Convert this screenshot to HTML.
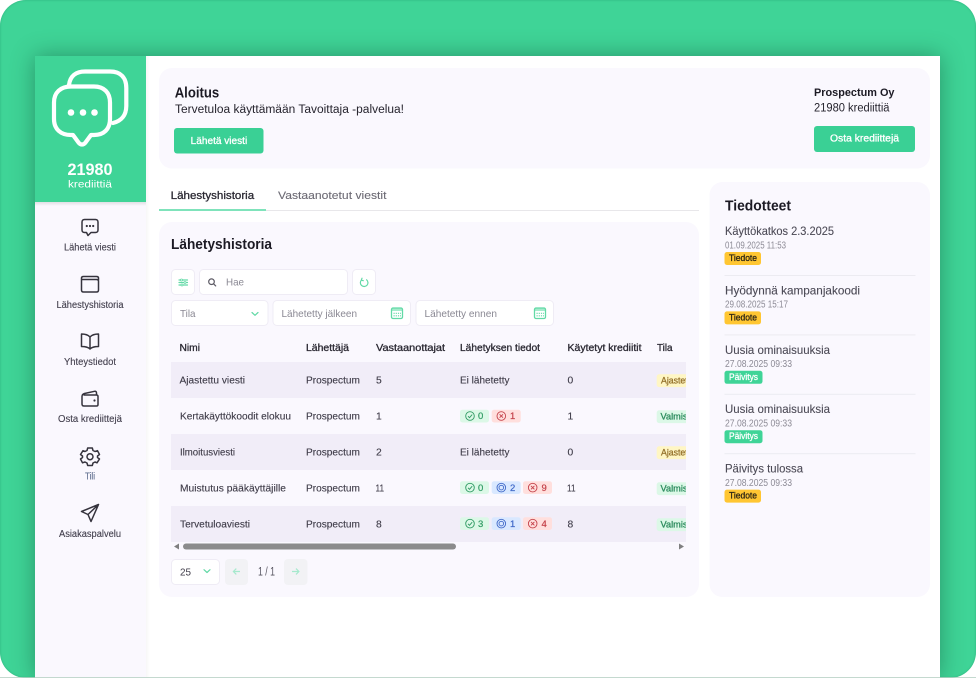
<!DOCTYPE html>
<html lang="fi"><head><meta charset="utf-8"><title>Tavoittaja</title>
<style>
html,body{margin:0;padding:0;background:#fff;width:976px;height:678px;overflow:hidden}
#bg{position:absolute;left:0;top:0;width:976px;height:678px;border-radius:26px;background:#3fd497;box-shadow:inset 0 0 2px #2fae7c;overflow:hidden}
#panel{position:absolute;left:35px;top:56px;width:905px;height:622px;background:#fff;box-shadow:0 0 22px rgba(15,70,48,.45)}
svg{position:absolute;left:0;top:0}
text{font-family:"Liberation Sans",sans-serif;font-size:10px;fill:#3a3844}
.b{font-weight:700}
.h{fill:#1c1a24;font-weight:700;font-size:14.5px}
.th{fill:#2b2933;stroke:#2b2933;stroke-width:.3px;font-size:10px}
.td{fill:#3e3b48;stroke:#3e3b48;stroke-width:.12px;font-size:10.3px}
.nav{fill:#44414f;stroke:#44414f;stroke-width:.12px;font-size:9.7px}
.ph{fill:#8a8893;font-size:10.3px}
.news{fill:#4c4a56;stroke:#4c4a56;stroke-width:.1px;font-size:12px}
.date{fill:#8d8b96;font-size:10px}
.tag{font-size:9.3px;stroke-width:.28px}
.n{font-size:9.5px;stroke-width:.2px}
.btn{font-size:10px;fill:#fff;stroke:#fff;stroke-width:.3px}
.ic{fill:none;stroke:#35333d;stroke-width:1.5;stroke-linecap:round;stroke-linejoin:round}
.gi{fill:none;stroke:#62d9a6;stroke-width:1.2;stroke-linecap:round;stroke-linejoin:round}
.box{fill:#fff;stroke:#efecf5;stroke-width:1}
</style></head><body>
<div id="bg"><div id="panel"></div></div>
<svg width="976" height="678" viewBox="0 0 976 678" xmlns="http://www.w3.org/2000/svg">
<defs>
<clipPath id="tc"><rect x="171" y="340" width="515" height="210"/></clipPath>
<linearGradient id="sr" x1="0" x2="1" y1="0" y2="0"><stop offset="0" stop-color="#000" stop-opacity=".035"/><stop offset="1" stop-color="#000" stop-opacity="0"/></linearGradient>
<linearGradient id="sd" x1="0" x2="0" y1="0" y2="1"><stop offset="0" stop-color="#000" stop-opacity=".1"/><stop offset="1" stop-color="#000" stop-opacity="0"/></linearGradient>
</defs>
<!-- sidebar -->
<rect x="35" y="56" width="111" height="622" fill="#faf8fe"/>
<rect x="146" y="56" width="4" height="622" fill="url(#sr)"/>
<rect x="35" y="56" width="111" height="146" fill="#3fd497"/>
<rect x="35" y="202" width="111" height="4" fill="url(#sd)"/>
<!-- logo -->
<g fill="none" stroke="#fff" stroke-width="4.2" stroke-linejoin="round" stroke-linecap="round">
<path d="M69 85C70 76 76 71.500 85 71.500H110C120.500 71.500 126.300 77.500 126.300 88V106C126.300 115 121.500 121 113 123"/>
<path d="M71 86.500H94C104 86.500 110 92.500 110 102.500V119C110 129 104 135 94 135H91L85.500 142.500C83.500 145.200 80.500 145.200 78.500 142.500L73 135H71C60.500 135 54 129 54 119V102.500C54 92.500 60.500 86.500 71 86.500Z"/>
</g>
<circle cx="71" cy="112.500" r="3.300" fill="#fff"/><circle cx="83" cy="112.500" r="3.300" fill="#fff"/><circle cx="94.500" cy="112.500" r="3.300" fill="#fff"/>
<text x="67.500" y="175" textLength="45" lengthAdjust="spacingAndGlyphs" class="b" style="font-size:17px;fill:#fff">21980</text>
<text x="68" y="187.500" textLength="44" lengthAdjust="spacingAndGlyphs" style="font-size:10.5px;fill:#fff">krediittiä</text>
<!-- nav icons -->
<g class="ic">
<path d="M84.500 219.500H95.500C97 219.500 98 220.500 98 222V230C98 231.500 97 232.500 95.500 232.500H91L88 235.500L86.500 232.500H84.500C83 232.500 82 231.500 82 230V222C82 220.500 83 219.500 84.500 219.500Z"/>
<path d="M81.500 279.500V290C81.500 291.200 82.300 292 83.500 292H96.500C97.700 292 98.500 291.200 98.500 290V281C98.500 279.800 97.700 279.500 96.500 279.500H81.500ZM81.500 279.500V278C81.500 277 82.300 276.500 83.500 276.500H96.500C97.700 276.500 98.500 277 98.500 278V280"/>
<path d="M90 337C88 334.800 85 334 81.500 334V346.500C85 346.500 88 347 90 349C92 347 95 346.500 98.500 346.500V334C95 334 92 334.800 90 337ZM90 337V349"/>
<path d="M84 395H96.500C97.500 395 98 395.700 98 396.500V404.500C98 405.500 97.500 406 96.500 406H84C82.800 406 82 405.200 82 404V396.500C82 394.500 83 394 84.500 393.500L94.500 391.300C95.800 391 96.500 391.800 96.500 393V395"/>
<path d="M87.700 448H92.300L93 450.500L95 451.500L97.500 450.700L99.500 454.500L97.500 456L97.500 457.500L99.500 459L97 462.800L95 462L93 463L92.300 465.500H87.700L87 463L85 462L82.500 462.800L80.500 459L82.500 457.500V456L80.500 454.500L83 450.700L85 451.500L87 450.500Z"/>
<circle cx="90" cy="456.700" r="3"/>
<path d="M98.500 504.500L81.500 511.500L88 514.500L91 521.500ZM98.500 504.500L88 514.500"/>
</g>
<circle cx="86.800" cy="226" r="1.100" fill="#35333d"/><circle cx="90" cy="226" r="1.100" fill="#35333d"/><circle cx="93.200" cy="226" r="1.100" fill="#35333d"/>
<circle cx="94.500" cy="400.500" r="1.100" fill="#35333d"/>
<text x="64" y="250.700" textLength="52" lengthAdjust="spacingAndGlyphs" class="nav">Lähetä viesti</text>
<text x="56.500" y="308" textLength="67" lengthAdjust="spacingAndGlyphs" class="nav">Lähestyshistoria</text>
<text x="64" y="365" textLength="52" lengthAdjust="spacingAndGlyphs" class="nav">Yhteystiedot</text>
<text x="58" y="422" textLength="64" lengthAdjust="spacingAndGlyphs" class="nav">Osta krediittejä</text>
<text x="85" y="479.500" textLength="10" lengthAdjust="spacingAndGlyphs" class="nav" style="fill:#5b6b8c;stroke:#5b6b8c">Tili</text>
<text x="59" y="537" textLength="62" lengthAdjust="spacingAndGlyphs" class="nav">Asiakaspalvelu</text>
<!-- top card -->
<rect x="159" y="68" width="771" height="100.500" rx="13" fill="#faf8fe"/>
<text x="174.700" y="97.300" textLength="44.500" lengthAdjust="spacingAndGlyphs" class="h">Aloitus</text>
<text x="175" y="113" textLength="229" lengthAdjust="spacingAndGlyphs" style="font-size:11.500px;fill:#26242e">Tervetuloa käyttämään Tavoittaja -palvelua!</text>
<rect x="174" y="128" width="89.500" height="25.500" rx="3" fill="#3ad095"/>
<text x="190.700" y="144" textLength="56.500" lengthAdjust="spacingAndGlyphs" class="btn">Lähetä viesti</text>
<text x="814" y="96" textLength="80.500" lengthAdjust="spacingAndGlyphs" class="b" style="font-size:11px;fill:#1c1a24">Prospectum Oy</text>
<text x="814" y="111.700" textLength="75.500" lengthAdjust="spacingAndGlyphs" style="font-size:11.500px;fill:#26242e">21980 krediittiä</text>
<rect x="814" y="126" width="101" height="26" rx="3" fill="#3ad095"/>
<text x="830" y="141.700" textLength="69" lengthAdjust="spacingAndGlyphs" class="btn">Osta krediittejä</text>
<!-- tabs -->
<rect x="159" y="210" width="540" height="1" fill="#e8e7ea"/>
<rect x="159" y="209" width="107" height="2" fill="#7fe3bb"/>
<text x="170.700" y="199" textLength="83.500" lengthAdjust="spacingAndGlyphs" style="font-size:11px;fill:#2b2933;stroke:#2b2933;stroke-width:.3px">Lähestyshistoria</text>
<text x="278" y="199" textLength="108.500" lengthAdjust="spacingAndGlyphs" style="font-size:11px;fill:#6c6a74;stroke:#6c6a74;stroke-width:.1px">Vastaanotetut viestit</text>
<!-- list card -->
<rect x="159" y="222" width="540" height="375" rx="13" fill="#faf8fe"/>
<text x="171" y="249" textLength="101" lengthAdjust="spacingAndGlyphs" class="h">Lähetyshistoria</text>
<!-- toolbar -->
<rect class="box" x="171.500" y="269.500" width="23" height="25" rx="4"/>
<rect class="box" x="199.500" y="269.500" width="148" height="25" rx="4"/>
<rect class="box" x="352.500" y="269.500" width="23" height="25" rx="4"/>
<rect class="box" x="171.500" y="300.500" width="96.500" height="25" rx="4"/>
<rect class="box" x="273" y="300.500" width="137.500" height="25" rx="4"/>
<rect class="box" x="416" y="300.500" width="137.500" height="25" rx="4"/>
<path class="gi" d="M179 280H187.500M179 282.500H187.500M179 285H187.500"/>
<circle cx="181.500" cy="280" r="1" fill="#fff" stroke="#62d9a6" stroke-width=".8"/><circle cx="185" cy="282.500" r="1" fill="#fff" stroke="#62d9a6" stroke-width=".8"/><circle cx="182" cy="285" r="1" fill="#fff" stroke="#62d9a6" stroke-width=".8"/>
<g fill="none" stroke="#5c5a64" stroke-width="1.200" stroke-linecap="round"><circle cx="211.500" cy="281.700" r="2.800"/><path d="M213.700 283.900L215.700 285.900"/></g>
<text x="226" y="285.500" textLength="18" lengthAdjust="spacingAndGlyphs" class="ph">Hae</text>
<path class="gi" d="M366.600 279.800A3.800 3.800 0 1 1 361.500 280M362 278.200L361.300 280.200L363.300 280.700"/>
<text x="180" y="317" textLength="15.500" lengthAdjust="spacingAndGlyphs" class="ph">Tila</text>
<path class="gi" d="M252 312.500L255 315.300L258 312.500"/>
<text x="281.500" y="317" textLength="75.500" lengthAdjust="spacingAndGlyphs" class="ph">Lähetetty jälkeen</text>
<text x="424.500" y="317" textLength="72.500" lengthAdjust="spacingAndGlyphs" class="ph">Lähetetty ennen</text>
<g><rect x="391.500" y="308" width="11" height="3" fill="#a5ebcc"/><rect class="gi" x="391.500" y="308" width="11" height="10.500" rx="1.500" style="stroke-width:1.300"/><path d="M393.500 313.300H401M393.500 315.800H401" stroke="#62d9a6" stroke-width="1.100" stroke-dasharray="1.200 1" fill="none"/></g>
<g><rect x="534.500" y="308" width="11" height="3" fill="#a5ebcc"/><rect class="gi" x="534.500" y="308" width="11" height="10.500" rx="1.500" style="stroke-width:1.300"/><path d="M536.500 313.300H544M536.500 315.800H544" stroke="#62d9a6" stroke-width="1.100" stroke-dasharray="1.200 1" fill="none"/></g>
<!-- table -->
<text x="179.500" y="351" textLength="20.500" lengthAdjust="spacingAndGlyphs" class="th">Nimi</text>
<text x="306" y="351" textLength="43" lengthAdjust="spacingAndGlyphs" class="th">Lähettäjä</text>
<text x="376" y="351" textLength="69" lengthAdjust="spacingAndGlyphs" class="th">Vastaanottajat</text>
<text x="460" y="351" textLength="80" lengthAdjust="spacingAndGlyphs" class="th">Lähetyksen tiedot</text>
<text x="567.500" y="351" textLength="74" lengthAdjust="spacingAndGlyphs" class="th">Käytetyt krediitit</text>
<text x="657" y="351" textLength="15.500" lengthAdjust="spacingAndGlyphs" class="th">Tila</text>
<rect x="171" y="362" width="515" height="36" fill="#f1edf8"/>
<rect x="171" y="434" width="515" height="36" fill="#f1edf8"/>
<rect x="171" y="506" width="515" height="36" fill="#f1edf8"/>
<g>
<text x="179.500" y="383.700" textLength="65.500" lengthAdjust="spacingAndGlyphs" class="td">Ajastettu viesti</text>
<text x="180" y="419.700" textLength="111" lengthAdjust="spacingAndGlyphs" class="td">Kertakäyttökoodit elokuu</text>
<text x="180" y="455.700" textLength="55" lengthAdjust="spacingAndGlyphs" class="td">Ilmoitusviesti</text>
<text x="180" y="491.700" textLength="106" lengthAdjust="spacingAndGlyphs" class="td">Muistutus pääkäyttäjille</text>
<text x="180" y="527.700" textLength="70" lengthAdjust="spacingAndGlyphs" class="td">Tervetuloaviesti</text>
<text x="306" y="383.700" textLength="54" lengthAdjust="spacingAndGlyphs" class="td">Prospectum</text>
<text x="306" y="419.700" textLength="54" lengthAdjust="spacingAndGlyphs" class="td">Prospectum</text>
<text x="306" y="455.700" textLength="54" lengthAdjust="spacingAndGlyphs" class="td">Prospectum</text>
<text x="306" y="491.700" textLength="54" lengthAdjust="spacingAndGlyphs" class="td">Prospectum</text>
<text x="306" y="527.700" textLength="54" lengthAdjust="spacingAndGlyphs" class="td">Prospectum</text>
<text x="376" y="383.700" class="td">5</text><text x="376" y="419.700" class="td">1</text><text x="376" y="455.700" class="td">2</text>
<text x="375.500" y="491.700" textLength="8.500" lengthAdjust="spacingAndGlyphs" class="td">11</text><text x="376" y="527.700" class="td">8</text>
<text x="460" y="383.700" textLength="49.500" lengthAdjust="spacingAndGlyphs" class="td">Ei lähetetty</text>
<text x="460" y="455.700" textLength="49.500" lengthAdjust="spacingAndGlyphs" class="td">Ei lähetetty</text>
<text x="567.500" y="383.700" class="td">0</text><text x="567.500" y="419.700" class="td">1</text><text x="567.500" y="455.700" class="td">0</text>
<text x="567" y="491.700" textLength="8.500" lengthAdjust="spacingAndGlyphs" class="td">11</text><text x="567.500" y="527.700" class="td">8</text>
</g>
<!-- send badges row 2 -->
<g>
<rect x="460" y="409.700" width="29" height="12.800" rx="2.500" fill="#dcf8e7"/>
<circle cx="470" cy="416" r="4.300" fill="none" stroke="#2f9a63" stroke-width=".9"/><path d="M468 416.200L469.500 417.700L472.200 414.600" fill="none" stroke="#2f9a63" stroke-width=".9"/>
<text x="478" y="419.200" class="n" style="fill:#2f9a63;stroke:#2f9a63">0</text>
<rect x="491.700" y="409.700" width="29" height="12.800" rx="2.500" fill="#ffdfdd"/>
<circle cx="501.300" cy="416" r="4.300" fill="none" stroke="#c4424a" stroke-width=".9"/><path d="M499.600 414.300L503 417.700M503 414.300L499.600 417.700" fill="none" stroke="#c4424a" stroke-width=".9"/>
<text x="510" y="419.200" class="n" style="fill:#c4424a;stroke:#c4424a">1</text>
</g>
<!-- row 4 -->
<g>
<rect x="460" y="481.200" width="29" height="12.800" rx="2.500" fill="#dcf8e7"/>
<circle cx="470" cy="487.600" r="4.300" fill="none" stroke="#2f9a63" stroke-width=".9"/><path d="M468 487.800L469.500 489.300L472.200 486.200" fill="none" stroke="#2f9a63" stroke-width=".9"/>
<text x="478" y="490.800" class="n" style="fill:#2f9a63;stroke:#2f9a63">0</text>
<rect x="491.700" y="481.200" width="29" height="12.800" rx="2.500" fill="#d9e8ff"/>
<circle cx="501.300" cy="487.600" r="4.300" fill="none" stroke="#3f68c8" stroke-width=".9"/><circle cx="501.300" cy="487.600" r="2.300" fill="none" stroke="#3f68c8" stroke-width=".9"/>
<text x="510" y="490.800" class="n" style="fill:#3f68c8;stroke:#3f68c8">2</text>
<rect x="523" y="481.200" width="29" height="12.800" rx="2.500" fill="#ffdfdd"/>
<circle cx="532.700" cy="487.600" r="4.300" fill="none" stroke="#c4424a" stroke-width=".9"/><path d="M531 485.900L534.400 489.300M534.400 485.900L531 489.300" fill="none" stroke="#c4424a" stroke-width=".9"/>
<text x="541.500" y="490.800" class="n" style="fill:#c4424a;stroke:#c4424a">9</text>
</g>
<!-- row 5 -->
<g>
<rect x="460" y="517.200" width="29" height="12.800" rx="2.500" fill="#dcf8e7"/>
<circle cx="470" cy="523.600" r="4.300" fill="none" stroke="#2f9a63" stroke-width=".9"/><path d="M468 523.800L469.500 525.300L472.200 522.200" fill="none" stroke="#2f9a63" stroke-width=".9"/>
<text x="478" y="526.800" class="n" style="fill:#2f9a63;stroke:#2f9a63">3</text>
<rect x="491.700" y="517.200" width="29" height="12.800" rx="2.500" fill="#d9e8ff"/>
<circle cx="501.300" cy="523.600" r="4.300" fill="none" stroke="#3f68c8" stroke-width=".9"/><circle cx="501.300" cy="523.600" r="2.300" fill="none" stroke="#3f68c8" stroke-width=".9"/>
<text x="510" y="526.800" class="n" style="fill:#3f68c8;stroke:#3f68c8">1</text>
<rect x="523" y="517.200" width="29" height="12.800" rx="2.500" fill="#ffdfdd"/>
<circle cx="532.700" cy="523.600" r="4.300" fill="none" stroke="#c4424a" stroke-width=".9"/><path d="M531 521.900L534.400 525.300M534.400 521.900L531 525.300" fill="none" stroke="#c4424a" stroke-width=".9"/>
<text x="541.500" y="526.800" class="n" style="fill:#c4424a;stroke:#c4424a">4</text>
</g>
<!-- status -->
<g clip-path="url(#tc)">
<rect x="656.700" y="374.300" width="40" height="12.800" rx="2.500" fill="#fff6c4"/>
<text x="661" y="383.500" textLength="34" lengthAdjust="spacingAndGlyphs" class="tag" style="fill:#94702a;stroke:#94702a">Ajastettu</text>
<rect x="656.700" y="410.300" width="40" height="12.800" rx="2.500" fill="#dcf8e7"/>
<text x="660.500" y="419.500" textLength="27" lengthAdjust="spacingAndGlyphs" class="tag" style="fill:#2a8a5c;stroke:#2a8a5c">Valmis</text>
<rect x="656.700" y="446.300" width="40" height="12.800" rx="2.500" fill="#fff6c4"/>
<text x="661" y="455.500" textLength="34" lengthAdjust="spacingAndGlyphs" class="tag" style="fill:#94702a;stroke:#94702a">Ajastettu</text>
<rect x="656.700" y="482.300" width="40" height="12.800" rx="2.500" fill="#dcf8e7"/>
<text x="660.500" y="491.500" textLength="27" lengthAdjust="spacingAndGlyphs" class="tag" style="fill:#2a8a5c;stroke:#2a8a5c">Valmis</text>
<rect x="656.700" y="518.300" width="40" height="12.800" rx="2.500" fill="#dcf8e7"/>
<text x="660.500" y="527.500" textLength="27" lengthAdjust="spacingAndGlyphs" class="tag" style="fill:#2a8a5c;stroke:#2a8a5c">Valmis</text>
</g>
<!-- scrollbar -->
<rect x="183" y="543.500" width="273" height="6" rx="3" fill="#8b8b8c"/>
<path d="M174 546.500L179 543.500V549.500Z" fill="#7f7f80"/>
<path d="M684 546.500L679 543.500V549.500Z" fill="#7f7f80"/>
<!-- pagination -->
<rect class="box" x="171.500" y="559.500" width="48" height="25" rx="4"/>
<text x="180" y="575.500" textLength="11" lengthAdjust="spacingAndGlyphs" style="font-size:10.500px;fill:#3e3b48">25</text>
<path class="gi" d="M204 569.700L207 572.500L210 569.700"/>
<rect x="225" y="559" width="23" height="26" rx="4" fill="#f2f2f5"/>
<rect x="284" y="559" width="23.500" height="26" rx="4" fill="#f2f2f5"/>
<path d="M240 571.500H233.500M236.300 568.600L233.400 571.500L236.300 574.400" fill="none" stroke="#a6e9cd" stroke-width="1.200"/>
<path d="M292 571.500H298.800M296 568.600L298.900 571.500L296 574.400" fill="none" stroke="#a6e9cd" stroke-width="1.200"/>
<text x="258" y="575.500" textLength="17" lengthAdjust="spacingAndGlyphs" style="font-size:11.500px;fill:#55535f">1 / 1</text>
<!-- news -->
<rect x="709.500" y="182" width="220.500" height="415" rx="13" fill="#faf8fe"/>
<text x="725" y="210.700" textLength="66" lengthAdjust="spacingAndGlyphs" class="h">Tiedotteet</text>
<text x="725" y="235" textLength="109" lengthAdjust="spacingAndGlyphs" class="news">Käyttökatkos 2.3.2025</text>
<text x="725" y="248.300" textLength="61" lengthAdjust="spacingAndGlyphs" class="date">01.09.2025 11:53</text>
<rect x="724.500" y="252" width="36.500" height="13" rx="2.500" fill="#ffc632"/>
<text x="729" y="261" textLength="28" lengthAdjust="spacingAndGlyphs" class="tag" style="fill:#2a2416;stroke:#2a2416">Tiedote</text>
<rect x="724.500" y="275" width="191" height="1" fill="#ecebf1"/>
<text x="725" y="294.400" textLength="135" lengthAdjust="spacingAndGlyphs" class="news">Hyödynnä kampanjakoodi</text>
<text x="725" y="307.700" textLength="63" lengthAdjust="spacingAndGlyphs" class="date">29.08.2025 15:17</text>
<rect x="724.500" y="311.400" width="36.500" height="13" rx="2.500" fill="#ffc632"/>
<text x="729" y="320.400" textLength="28" lengthAdjust="spacingAndGlyphs" class="tag" style="fill:#2a2416;stroke:#2a2416">Tiedote</text>
<rect x="724.500" y="334.400" width="191" height="1" fill="#ecebf1"/>
<text x="725" y="353.800" textLength="105" lengthAdjust="spacingAndGlyphs" class="news">Uusia ominaisuuksia</text>
<text x="725" y="367.100" textLength="67" lengthAdjust="spacingAndGlyphs" class="date">27.08.2025 09:33</text>
<rect x="724.500" y="370.800" width="38" height="13" rx="2.500" fill="#3fd497"/>
<text x="729" y="379.800" textLength="29" lengthAdjust="spacingAndGlyphs" class="tag" style="fill:#fff;stroke:#fff">Päivitys</text>
<rect x="724.500" y="393.800" width="191" height="1" fill="#ecebf1"/>
<text x="725" y="413.200" textLength="105" lengthAdjust="spacingAndGlyphs" class="news">Uusia ominaisuuksia</text>
<text x="725" y="426.500" textLength="67" lengthAdjust="spacingAndGlyphs" class="date">27.08.2025 09:33</text>
<rect x="724.500" y="430.200" width="38" height="13" rx="2.500" fill="#3fd497"/>
<text x="729" y="439.200" textLength="29" lengthAdjust="spacingAndGlyphs" class="tag" style="fill:#fff;stroke:#fff">Päivitys</text>
<rect x="724.500" y="453.200" width="191" height="1" fill="#ecebf1"/>
<text x="725" y="472.600" textLength="78" lengthAdjust="spacingAndGlyphs" class="news">Päivitys tulossa</text>
<text x="725" y="485.900" textLength="67" lengthAdjust="spacingAndGlyphs" class="date">27.08.2025 09:33</text>
<rect x="724.500" y="489.600" width="36.500" height="13" rx="2.500" fill="#ffc632"/>
<text x="729" y="498.600" textLength="28" lengthAdjust="spacingAndGlyphs" class="tag" style="fill:#2a2416;stroke:#2a2416">Tiedote</text>
<rect x="0" y="677" width="976" height="1" fill="#b5cfc3" opacity=".8"/>
</svg>
</body></html>
